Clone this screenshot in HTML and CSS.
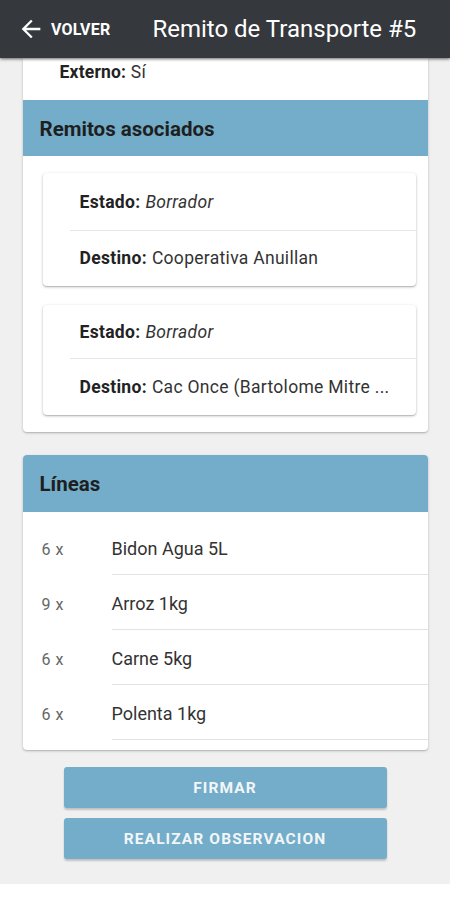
FILE: index.html
```html
<!DOCTYPE html>
<html lang="es">
<head>
<meta charset="utf-8">
<link rel="stylesheet" href="styles.css">
</head>
<body>
<div class="app">
  <header class="topbar">
    <button class="back">
      <svg width="28" height="28" viewBox="0 0 24 24"><path d="M20 11H7.83l5.59-5.59L12 4l-8 8 8 8 1.41-1.41L7.83 13H20v-2z" fill="#fff"/></svg>
      <span>VOLVER</span>
    </button>
    <h1 class="title">Remito de Transporte #5</h1>
  </header>
  <main class="content">
    <section class="card card-top">
      <div class="info-row"><b>Externo:</b> Sí</div>
      <div class="card-head">Remitos asociados</div>
      <div class="sub-list">
        <div class="sub-card">
          <div class="sub-row"><b>Estado:</b> <i>Borrador</i></div>
          <div class="sub-row"><b>Destino:</b> Cooperativa Anuillan</div>
        </div>
        <div class="sub-card">
          <div class="sub-row"><b>Estado:</b> <i>Borrador</i></div>
          <div class="sub-row"><b>Destino:</b> Cac Once (Bartolome Mitre ...</div>
        </div>
      </div>
    </section>
    <section class="card card-lines">
      <div class="card-head rounded">Líneas</div>
      <ul class="lines">
        <li><span class="qty">6 x</span><span class="item">Bidon Agua 5L</span></li>
        <li><span class="qty">9 x</span><span class="item">Arroz 1kg</span></li>
        <li><span class="qty">6 x</span><span class="item">Carne 5kg</span></li>
        <li><span class="qty">6 x</span><span class="item">Polenta 1kg</span></li>
      </ul>
    </section>
    <div class="actions">
      <button class="btn">FIRMAR</button>
      <button class="btn">REALIZAR OBSERVACION</button>
    </div>
  </main>
  <footer class="bottom"></footer>
</div>
</body>
</html>
```
FILE: styles.css
```css
* { box-sizing: border-box; }
html, body { margin: 0; padding: 0; }
body {
  font-family: Roboto, "Noto Sans", "Liberation Sans", sans-serif;
  background: #fff;
  width: 450px;
  height: 900px;
  overflow: hidden;
}
.app {
  display: flex;
  flex-direction: column;
  height: 900px;
}
.topbar {
  height: 58px;
  background: #35383c;
  display: flex;
  align-items: center;
  padding: 0 0 0 17px;
  box-shadow: 0 1px 3px rgba(0,0,0,0.6);
  position: relative;
  z-index: 2;
  flex-shrink: 0;
}
.back {
  background: none;
  border: 0;
  padding: 0;
  display: flex;
  align-items: center;
  gap: 6px;
  color: #fff;
  font-family: inherit;
  font-weight: 700;
  font-size: 16px;
  letter-spacing: 0.2px;
}
.back svg { display: block; margin-top: -1px; }
.title {
  margin: 0 0 0 42px;
  color: #fff;
  font-weight: 400;
  font-size: 24px;
  white-space: nowrap;
}
.content {
  flex: 1;
  background: #f0f0f0;
  display: flex;
  flex-direction: column;
  align-items: center;
  overflow: hidden;
}
.card {
  width: 405px;
  background: #fff;
  border-radius: 0 0 4px 4px;
  box-shadow: 0 1px 3px rgba(0,0,0,0.2), 0 1px 1px rgba(0,0,0,0.1);
  flex-shrink: 0;
}
.info-row {
  height: 42px;
  padding: 3px 0 0 37px;
  font-size: 17.5px;
  line-height: 22px;
  color: #333;
  letter-spacing: 0.2px;
}
.info-row b, .sub-row b { color: #222; font-weight: 700; }
.card-head {
  height: 56px;
  background: #74adc9;
  color: #1d1f21;
  font-weight: 700;
  font-size: 20.5px;
  display: flex;
  align-items: center;
  padding-left: 17px;
  padding-top: 1px;
}
.card-head.rounded { border-radius: 4px 4px 0 0; padding-left: 17px; height: 57px; }
.sub-list {
  padding: 17px 12px 17px 20px;
  display: flex;
  flex-direction: column;
  gap: 19px;
}
.sub-card {
  background: #fff;
  border-radius: 4px;
  box-shadow: 0 1px 3px rgba(0,0,0,0.25), 0 1px 1px rgba(0,0,0,0.12);
  padding-left: 27px;
  padding-bottom: 1px;
}
.sub-row {
  height: 56px;
  display: flex;
  align-items: center;
  gap: 5px;
  padding-left: 10px;
  font-size: 17.5px;
  letter-spacing: 0.3px;
  color: #333;
  white-space: nowrap;
}
.sub-row + .sub-row { border-top: 1px solid #e6e6e6; height: 55px; }
.sub-card .sub-row:first-child { height: 57px; }
.sub-row i { color: #333; }
.sub-card + .sub-card .sub-row:first-child { height: 53px; }
.sub-card + .sub-card .sub-row + .sub-row { height: 56px; }
.card-lines {
  margin-top: 23px;
  border-radius: 4px;
}
.lines {
  list-style: none;
  margin: 0;
  padding: 8px 0 10px;
}
.lines li {
  display: flex;
  align-items: center;
  height: 55px;
  padding-left: 19px;
}
.qty {
  width: 70px;
  font-size: 16px;
  color: #666;
  padding-top: 4px;
  letter-spacing: 0.5px;
}
.item {
  flex: 1;
  font-size: 18px;
  color: #333;
  height: 55px;
  display: flex;
  align-items: center;
  border-bottom: 1px solid #e3e3e3;
  padding-top: 2px;
}
.actions {
  margin-top: 17px;
  display: flex;
  flex-direction: column;
  gap: 10px;
  width: 323px;
}
.btn {
  height: 41px;
  background: #74adc9;
  border: 0;
  border-radius: 3px;
  color: #f2f6f8;
  font-family: inherit;
  font-weight: 700;
  font-size: 15.5px;
  letter-spacing: 1.1px;
  box-shadow: 0 2px 2px rgba(0,0,0,0.2);
}
.bottom {
  height: 16px;
  background: #fff;
  flex-shrink: 0;
}
```
